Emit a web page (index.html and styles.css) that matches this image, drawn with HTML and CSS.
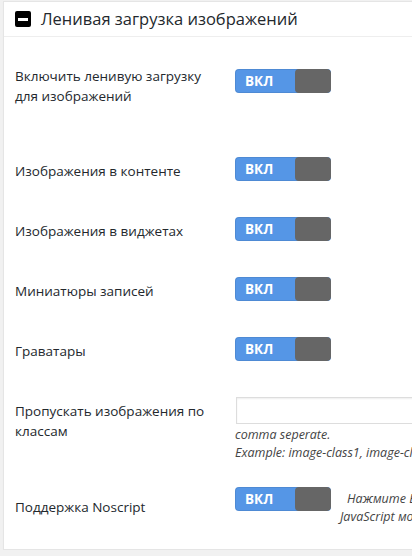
FILE: index.html
```html
<!DOCTYPE html>
<html lang="ru">
<head>
<meta charset="utf-8">
<link rel="stylesheet" href="styles.css">
</head>
<body>
<div class="panel">
  <div class="panel-head">
    <span class="head-icon"><span class="head-minus"></span></span>
    <h2 class="head-title">Ленивая загрузка изображений</h2>
  </div>
  <div class="rows">
    <div class="row row-first">
      <div class="label">Включить ленивую загрузку для изображений</div>
      <div class="ctrl"><span class="toggle"><span class="toggle-on">ВКЛ</span><span class="toggle-knob"></span></span></div>
    </div>
    <div class="row">
      <div class="label">Изображения в контенте</div>
      <div class="ctrl"><span class="toggle"><span class="toggle-on">ВКЛ</span><span class="toggle-knob"></span></span></div>
    </div>
    <div class="row">
      <div class="label">Изображения в виджетах</div>
      <div class="ctrl"><span class="toggle"><span class="toggle-on">ВКЛ</span><span class="toggle-knob"></span></span></div>
    </div>
    <div class="row">
      <div class="label">Миниатюры записей</div>
      <div class="ctrl"><span class="toggle"><span class="toggle-on">ВКЛ</span><span class="toggle-knob"></span></span></div>
    </div>
    <div class="row">
      <div class="label">Граватары</div>
      <div class="ctrl"><span class="toggle"><span class="toggle-on">ВКЛ</span><span class="toggle-knob"></span></span></div>
    </div>
    <div class="row row-input">
      <div class="label">Пропускать изображения по классам</div>
      <div class="ctrl">
        <input class="text-input" type="text">
        <p class="desc">comma seperate.<br>Example: image-class1, image-class2</p>
      </div>
    </div>
    <div class="row row-last">
      <div class="label">Поддержка Noscript</div>
      <div class="ctrl ctrl-inline">
        <span class="toggle"><span class="toggle-on">ВКЛ</span><span class="toggle-knob"></span></span>
        <p class="side-desc">Нажмите ВКЛ, чтобы включить noscript<br>JavaScript может быть отключен.</p>
      </div>
    </div>
  </div>
</div>
</body>
</html>
```
FILE: styles.css
```css
html, body {
  margin: 0;
  padding: 0;
  background: #f1f1f1;
  font-family: "Open Sans", "Noto Sans", sans-serif;
  color: #23282d;
  overflow: hidden;
}

.panel {
  margin: 1px 0 0 3px;
  width: 409px;
  height: 549px;
  box-sizing: border-box;
  background: #fff;
  border: 1px solid #e5e5e5;
  border-right: none;
  box-shadow: 0 1px 1px rgba(0, 0, 0, 0.04);
  overflow: hidden;
}

.panel-head {
  height: 34px;
  border-bottom: 1px solid #eeeeee;
  display: flex;
  align-items: center;
  padding-left: 11px;
  gap: 10px;
}

.head-icon {
  width: 16px;
  height: 16px;
  border-radius: 2px;
  background: #000;
  display: flex;
  align-items: center;
  justify-content: center;
}

.head-minus {
  width: 10px;
  height: 3px;
  background: #fff;
}

.head-title {
  margin: 0;
  font-size: 16.5px;
  font-weight: 400;
  line-height: 20px;
  color: #23282d;
  white-space: nowrap;
}

.rows {
  padding-left: 11px;
}

.row {
  display: grid;
  grid-template-columns: 220px 1fr;
  height: 60px;
  font-size: 13.5px;
  line-height: 20px;
}

.row .label {
  padding-top: 24px;
  padding-right: 10px;
}

.row .ctrl {
  padding-top: 20px;
  min-width: 0;
}

.row-first {
  height: 100px;
}

.row-first .label {
  padding-top: 29px;
}

.row-first .ctrl {
  padding-top: 32px;
}

.row-input {
  height: 90px;
}

.row-input .ctrl {
  overflow: hidden;
}

.row-last {
  height: 83px;
}

.row-last .label {
  padding-top: 30px;
}

.toggle {
  display: flex;
  flex: none;
  width: 96px;
  height: 24px;
  border-radius: 4px;
  overflow: hidden;
  background: #5596e6;
  box-shadow: inset 0 0 0 1px rgba(0, 0, 0, 0.08);
}

.toggle-on {
  width: 60px;
  box-sizing: border-box;
  padding-left: 10px;
  color: #fff;
  font-weight: 700;
  font-size: 13.5px;
  line-height: 24px;
}

.toggle-knob {
  width: 36px;
  height: 24px;
  background: #666666;
  border-radius: 4px;
}

.text-input {
  display: block;
  width: 240px;
  height: 27px;
  box-sizing: border-box;
  margin: 0 0 0 1px;
  border: 1px solid #dddddd;
  box-shadow: inset 0 1px 2px rgba(0, 0, 0, 0.07);
  background: #fff;
  padding: 0 6px;
  font: inherit;
}

.desc {
  margin: 2px 0 0 0;
  font-size: 12.5px;
  line-height: 18px;
  font-style: italic;
  color: #444;
  white-space: nowrap;
}

.ctrl-inline {
  display: flex;
  align-items: flex-start;
  overflow: hidden;
}

.side-desc {
  margin: 3px 0 0 9px;
  flex: none;
  text-indent: 7px;
  font-size: 12.5px;
  line-height: 18px;
  font-style: italic;
  color: #444;
  white-space: nowrap;
}
```
